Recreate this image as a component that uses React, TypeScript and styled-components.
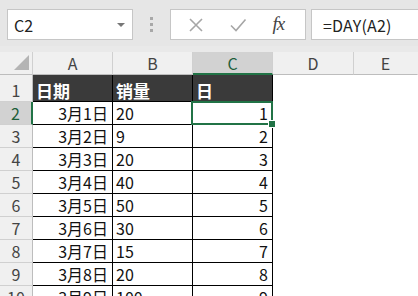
import React from "react";
import styled, { createGlobalStyle } from "styled-components";

const GlobalStyle = createGlobalStyle`
  html, body {
    margin: 0;
    padding: 0;
    background: #ffffff;
    overflow: hidden;
  }
  body {
    font-family: "Noto Sans CJK SC", "Noto Sans", sans-serif;
  }
`;

const FONT = `"Noto Sans CJK SC", "Liberation Sans", sans-serif`;
const GREEN = "#217346";

const Page = styled.div`
  width: 418px;
  height: 296px;
  overflow: hidden;
  background: #ffffff;
`;

const Toolbar = styled.div`
  height: 46px;
  background: #e6e6e6;
  display: flex;
  align-items: flex-start;
  padding-top: 9px;
  box-sizing: border-box;
`;

const Box = styled.div<{ width?: number }>`
  box-sizing: border-box;
  height: 31px;
  background: #ffffff;
  border: 1px solid #c6c6c6;
  display: flex;
  align-items: center;
  flex: ${(p) => (p.width ? `0 0 ${p.width}px` : "1 1 auto")};
  font-family: ${FONT};
  font-size: 16px;
  color: #222;
`;

const NameBox = styled(Box)`
  margin-left: 7px;
  padding-left: 6px;
  justify-content: space-between;
  padding-right: 7px;
`;

const Caret = styled.span`
  width: 0;
  height: 0;
  border-left: 4px solid transparent;
  border-right: 4px solid transparent;
  border-top: 4px solid #777;
`;

const Grip = styled.div`
  flex: 0 0 37px;
  height: 31px;
  display: flex;
  flex-direction: column;
  align-items: center;
  justify-content: center;
  gap: 3px;
  span {
    width: 3px;
    height: 3px;
    background: #a8a8a8;
  }
`;

const FuncBox = styled(Box)`
  justify-content: space-around;
  padding: 0 8px 0 4px;
  margin-right: 5px;
`;

const FxLabel = styled.span`
  font-family: "Liberation Serif", serif;
  font-style: italic;
  font-size: 19px;
  color: #444;
  letter-spacing: -1px;
  margin-top: -2px;
`;

const FormulaBox = styled(Box)`
  padding-left: 11px;
  border-right: none;
  letter-spacing: 0.2px;
`;

const Gap = styled.div`
  height: 6px;
  background: #e9e9e9;
`;

const Sheet = styled.div`
  display: grid;
  grid-template-columns: 33px 80px 80px 80px 81px 64px;
  grid-template-rows: 23px 27px repeat(9, 23px);
`;

const ColHead = styled.div<{ active?: boolean; last?: boolean }>`
  box-sizing: border-box;
  background: ${(p) => (p.active ? "#d2d2d2" : "#f0f0f0")};
  border-right: 1px solid ${(p) => (p.last ? "transparent" : "#d0d0d0")};
  border-bottom: ${(p) => (p.active ? `2px solid ${GREEN}` : "1px solid #bdbdbd")};
  color: ${(p) => (p.active ? "#1e5f3a" : "#444")};
  font-family: ${FONT};
  font-size: 16px;
  line-height: 22px;
  text-align: center;
`;

const Corner = styled(ColHead)`
  position: relative;
  &::after {
    content: "";
    position: absolute;
    right: 3px;
    bottom: 4px;
    width: 0;
    height: 0;
    border-left: 15px solid transparent;
    border-bottom: 15px solid #b4b4b4;
  }
`;

const RowHead = styled.div<{ active?: boolean }>`
  box-sizing: border-box;
  background: ${(p) => (p.active ? "#d2d2d2" : "#f0f0f0")};
  border-right: ${(p) => (p.active ? `2px solid ${GREEN}` : "1px solid #bdbdbd")};
  border-bottom: 1px solid #d0d0d0;
  color: ${(p) => (p.active ? "#1e5f3a" : "#444")};
  font-family: ${FONT};
  font-size: 16px;
  display: flex;
  align-items: flex-end;
  justify-content: center;
  padding-bottom: 1px;
  line-height: 20px;
`;

const Cell = styled.div<{ align?: "left" | "right"; title?: boolean }>`
  box-sizing: border-box;
  position: relative;
  background: ${(p) => (p.title ? "#3a3a3a" : "#ffffff")};
  color: ${(p) => (p.title ? "#ffffff" : "#111")};
  font-weight: ${(p) => (p.title ? 700 : 400)};
  border-right: 1px solid #000;
  border-bottom: 1px solid #000;
  font-family: ${FONT};
  font-size: ${(p) => (p.title ? "17px" : "16px")};
  display: flex;
  align-items: flex-end;
  justify-content: ${(p) => (p.align === "right" ? "flex-end" : "flex-start")};
  padding: 0 4px 0 3px;
  line-height: 21px;
  white-space: nowrap;
`;

const SelectedCell = styled(Cell)`
  &::after {
    content: "";
    position: absolute;
    left: -2px;
    top: -1px;
    right: -1px;
    bottom: -1px;
    border: 2px solid ${GREEN};
  }
  &::before {
    content: "";
    position: absolute;
    right: -4px;
    bottom: -4px;
    width: 6px;
    height: 6px;
    background: ${GREEN};
    border: 1px solid #ffffff;
    z-index: 2;
  }
`;

const Blank = styled.div``;

const rows: [string, string, string][] = [
  ["3月1日", "20", "1"],
  ["3月2日", "9", "2"],
  ["3月3日", "20", "3"],
  ["3月4日", "40", "4"],
  ["3月5日", "50", "5"],
  ["3月6日", "30", "6"],
  ["3月7日", "15", "7"],
  ["3月8日", "20", "8"],
  ["3月9日", "100", "9"],
];

const CrossIcon = () => (
  <svg width="16" height="16" viewBox="0 0 16 16">
    <path d="M2 2 L14 14 M14 2 L2 14" stroke="#a6a6a6" strokeWidth="1.6" fill="none" />
  </svg>
);

const CheckIcon = () => (
  <svg width="18" height="16" viewBox="0 0 18 16">
    <path d="M2 8.5 L7 13.5 L16.5 2.5" stroke="#a6a6a6" strokeWidth="1.6" fill="none" />
  </svg>
);

export default function App() {
  return (
    <Page>
      <GlobalStyle />
      <Toolbar>
        <NameBox width={126}>
          <span>C2</span>
          <Caret />
        </NameBox>
        <Grip>
          <span />
          <span />
          <span />
        </Grip>
        <FuncBox width={136}>
          <CrossIcon />
          <CheckIcon />
          <FxLabel>fx</FxLabel>
        </FuncBox>
        <FormulaBox>=DAY(A2)</FormulaBox>
      </Toolbar>
      <Gap />
      <Sheet>
        <Corner />
        <ColHead>A</ColHead>
        <ColHead>B</ColHead>
        <ColHead active>C</ColHead>
        <ColHead>D</ColHead>
        <ColHead last>E</ColHead>

        <RowHead>1</RowHead>
        <Cell title>日期</Cell>
        <Cell title>销量</Cell>
        <Cell title>日</Cell>
        <Blank />
        <Blank />

        {rows.map(([a, b, c], i) => (
          <React.Fragment key={a}>
            <RowHead active={i === 0}>{i + 2}</RowHead>
            <Cell align="right">{a}</Cell>
            <Cell>{b}</Cell>
            {i === 0 ? <SelectedCell align="right">{c}</SelectedCell> : <Cell align="right">{c}</Cell>}
            <Blank />
            <Blank />
          </React.Fragment>
        ))}
      </Sheet>
    </Page>
  );
}
